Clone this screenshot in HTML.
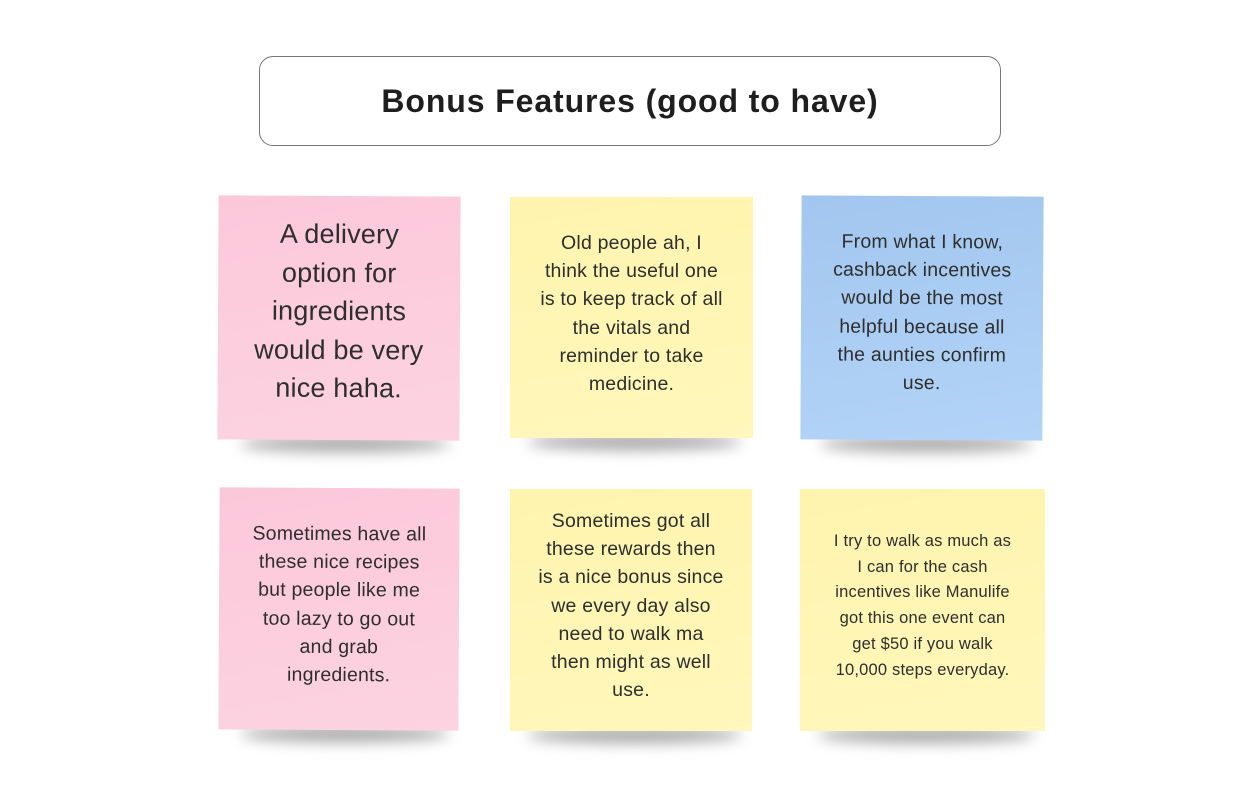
<!DOCTYPE html>
<html><head><meta charset="utf-8"><style>
html,body{margin:0;padding:0;background:#fff;}
body{width:1257px;height:794px;position:relative;overflow:hidden;font-family:"Liberation Sans","DejaVu Sans",sans-serif;color:#2e2e2e;}
.title{position:absolute;left:259px;top:56px;width:740px;height:88px;border:1px solid #777;border-radius:14px;box-sizing:content-box;}
.title div{position:absolute;left:0;right:0;top:24px;text-align:center;font-weight:bold;font-size:32px;line-height:40px;color:#1e1e1e;letter-spacing:0.9px;}
.sh{position:absolute;height:16px;border-radius:50%;box-shadow:0 12px 14px rgba(0,0,0,0.35);background:transparent;}
.note{position:absolute;box-sizing:border-box;}
.note .t{position:absolute;left:0;right:0;text-align:center;letter-spacing:0.2px;}
.pink{background:linear-gradient(170deg,#fbc8da,#fdd3e1);}
.yel{background:linear-gradient(170deg,#fff4ae,#fff7bb);}
.blue{background:linear-gradient(170deg,#a2c6ef,#b3d4f7);}
</style></head><body>
<div class="title"><div>Bonus Features (good to have)</div></div>

<div class="sh" style="left:240px;top:424px;width:210px;"></div>
<div class="sh" style="left:527px;top:422px;width:215px;"></div>
<div class="sh" style="left:820px;top:424px;width:213px;"></div>
<div class="sh" style="left:240px;top:714px;width:210px;"></div>
<div class="sh" style="left:527px;top:715px;width:215px;"></div>
<div class="sh" style="left:817px;top:715px;width:218px;"></div>

<div class="note pink" style="left:218px;top:196px;width:242px;height:244px;transform:rotate(0.3deg)">
<div class="t" style="top:19px;font-size:27px;line-height:38.5px;">A delivery<br>option for<br>ingredients<br>would be very<br>nice haha.</div></div>

<div class="note yel" style="left:510px;top:197px;width:243px;height:241px;">
<div class="t" style="top:32px;font-size:19.5px;line-height:28.2px;">Old people ah, I<br>think the useful one<br>is to keep track of all<br>the vitals and<br>reminder to take<br>medicine.</div></div>

<div class="note blue" style="left:801px;top:196px;width:242px;height:244px;transform:rotate(0.3deg)">
<div class="t" style="top:32px;font-size:19.5px;line-height:28.2px;">From what I know,<br>cashback incentives<br>would be the most<br>helpful because all<br>the aunties confirm<br>use.</div></div>

<div class="note pink" style="left:219px;top:488px;width:240px;height:242px;transform:rotate(0.3deg)">
<div class="t" style="top:32px;font-size:19.5px;line-height:28.2px;">Sometimes have all<br>these nice recipes<br>but people like me<br>too lazy to go out<br>and grab<br>ingredients.</div></div>

<div class="note yel" style="left:510px;top:489px;width:242px;height:242px;">
<div class="t" style="top:18px;font-size:19.5px;line-height:28.2px;">Sometimes got all<br>these rewards then<br>is a nice bonus since<br>we every day also<br>need to walk ma<br>then might as well<br>use.</div></div>

<div class="note yel" style="left:800px;top:489px;width:245px;height:242px;">
<div class="t" style="top:40px;font-size:16.5px;line-height:25.7px;">I try to walk as much as<br>I can for the cash<br>incentives like Manulife<br>got this one event can<br>get $50 if you walk<br>10,000 steps everyday.</div></div>
</body></html>
